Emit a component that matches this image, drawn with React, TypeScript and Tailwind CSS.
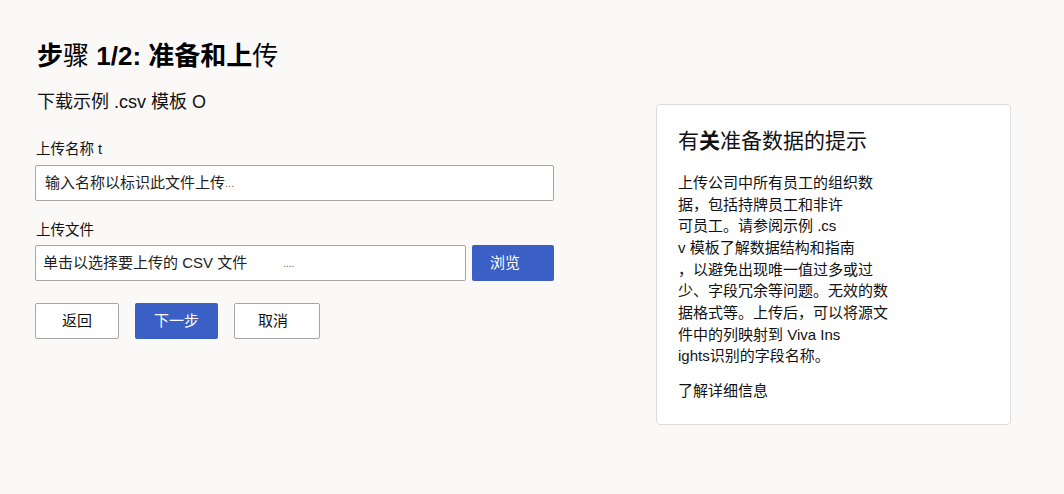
import React from "react";

const font = { fontFamily: '"Liberation Sans", "Noto Sans CJK SC", sans-serif' };

export default function App() {
  const lines = [
    "上传公司中所有员工的组织数",
    "据，包括持牌员工和非许",
    "可员工。请参阅示例 .cs",
    "v 模板了解数据结构和指南",
    "，以避免出现唯一值过多或过",
    "少、字段冗余等问题。无效的数",
    "据格式等。上传后，可以将源文",
    "件中的列映射到 Viva Ins",
    "ights识别的字段名称。",
  ];
  return (
    <div className="w-[1064px] h-[494px] bg-[#faf9f8] text-[#111] flex" style={font}>
      <div className="w-[620px] pl-[35px] pt-[40px] flex flex-col">
        <h1 className="pl-[2px] text-[26px] leading-[32px] text-black">
          <span className="font-bold">步</span>
          <span>骤 </span>
          <span className="font-semibold">1/2: 准备和上</span>
          <span>传</span>
        </h1>
        <div className="pl-[2px] mt-[18px] text-[18px] leading-[24px]">下载示例 .csv 模板 O</div>
        <div className="pl-[1px] mt-[25px] text-[14.5px] leading-[20px]">上传名称 t</div>
        <div className="mt-[6px] w-[519px] h-[36px] bg-white border border-[#a6a6a6] rounded-[2px] flex items-center px-[9px] text-[15px] text-[#222]">
          输入名称以标识此文件上传<span className="text-[11px] text-[#7a6a50]">...</span>
        </div>
        <div className="pl-[1px] mt-[19px] text-[14.5px] leading-[20px]">上传文件</div>
        <div className="mt-[5px] flex gap-[6px]">
          <div className="w-[431px] h-[36px] bg-white border border-[#a6a6a6] rounded-[2px] flex items-center px-[7px] text-[15px] text-[#222]">
            单击以选择要上传的 CSV 文件<span className="ml-[36px] text-[10px] text-[#555]">....</span>
          </div>
          <div className="w-[82px] h-[36px] bg-[#3a5fc5] rounded-[2px] flex items-center justify-center pr-[16px] text-white text-[15px]">
            浏览
          </div>
        </div>
        <div className="mt-[22px] flex gap-[16px]">
          <div className="w-[84px] h-[36px] bg-white border border-[#a6a6a6] rounded-[2px] flex items-center justify-center text-[15px]">
            返回
          </div>
          <div className="w-[83px] h-[36px] bg-[#3a5fc5] rounded-[2px] flex items-center justify-center text-white text-[15px]">
            下一步
          </div>
          <div className="w-[86px] h-[36px] bg-white border border-[#a6a6a6] rounded-[2px] flex items-center justify-center pr-[8px] text-[15px]">
            取消
          </div>
        </div>
      </div>
      <div className="pl-[36px] pt-[104px]">
        <div className="w-[355px] h-[321px] bg-white border border-[#dcdcdc] rounded-[4px] px-[21px] pt-[22px]">
          <div className="text-[21px] leading-[28px]">
            有<span className="font-bold">关</span>准备数据的提示
          </div>
          <div className="mt-[17px] text-[15px] leading-[21.65px]">
            {lines.map((l, i) => (
              <div key={i}>{l}</div>
            ))}
          </div>
          <div className="mt-[13px] text-[15px] leading-[21px]">了解详细信息</div>
        </div>
      </div>
    </div>
  );
}
